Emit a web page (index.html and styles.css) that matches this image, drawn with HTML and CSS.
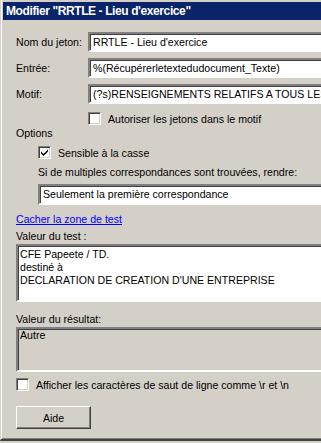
FILE: index.html
```html
<!DOCTYPE html>
<html lang="fr">
<head>
    <meta charset="UTF-8">
    <title>Modifier "RRTLE - Lieu d'exercice"</title>
    <link rel="stylesheet" href="styles.css">
</head>
<body>
    <div class="window">
        <div class="titlebar">Modifier "RRTLE - Lieu d'exercice"</div>

        <div class="content">
            <div class="fields">
                <label class="field-label">Nom du jeton:</label>
                <div class="field">RRTLE - Lieu d'exercice</div>

                <label class="field-label">Entrée:</label>
                <div class="field">%(Récupérerletextedudocument_Texte)</div>

                <label class="field-label">Motif:</label>
                <div class="field">(?s)RENSEIGNEMENTS RELATIFS A TOUS LES ETABLISSEMENTS</div>
            </div>

            <div class="check-row pattern-check">
                <span class="checkbox"></span>
                <span>Autoriser les jetons dans le motif</span>
            </div>

            <div class="group-title">Options</div>
            <div class="options">
                <div class="check-row">
                    <span class="checkbox">
                        <svg width="9" height="9" viewBox="0 0 9 9"><path d="M1 3.5 L3.5 6 L8 1.5 L8 3.5 L3.5 8 L1 5.5 Z" fill="#000"/></svg>
                    </span>
                    <span>Sensible à la casse</span>
                </div>
                <div class="hint">Si de multiples correspondances sont trouvées, rendre:</div>
                <div class="field combo">Seulement la première correspondance</div>
            </div>

            <a class="link" href="#">Cacher la zone de test</a>

            <div class="box-label">Valeur du test :</div>
            <div class="field area">CFE Papeete / TD.<br>destiné à<br>DECLARATION DE CREATION D'UNE ENTREPRISE</div>

            <div class="box-label result-label">Valeur du résultat:</div>
            <div class="field area result">Autre</div>

            <div class="check-row newline-check">
                <span class="checkbox"></span>
                <span>Afficher les caractères de saut de ligne comme \r et \n</span>
            </div>

            <button class="btn">Aide</button>
        </div>
    </div>
</body>
</html>
```

FILE: styles.css
```css
body {
    margin: 0;
    width: 321px;
    height: 443px;
    overflow: hidden;
    background-color: #d4d0c8;
    font-family: "Liberation Sans", Arial, sans-serif;
    font-size: 10.6px;
    color: #000;
}
.window {
    height: 441px;
    border-left: 1px solid #d4d0c8;
    border-bottom: 2px solid #404040;
    box-shadow: inset 1px 0 #fff, inset 0 -1px #808080;
    padding: 2px 0 0 2px;
    box-sizing: border-box;
    overflow: hidden;
}
.titlebar {
    height: 18px;
    line-height: 18px;
    background-color: #0a246a;
    color: #fff;
    font-weight: bold;
    font-size: 12px;
    letter-spacing: -0.4px;
    padding-left: 3px;
    white-space: nowrap;
}
.content {
    padding: 12px 0 0 13px;
    width: 400px;
}
.fields {
    display: grid;
    grid-template-columns: 72px 1fr;
    row-gap: 6px;
    align-items: center;
}
.field {
    background: #fff;
    height: 20px;
    line-height: 16px;
    padding: 0 3px;
    box-sizing: border-box;
    border: 2px solid;
    border-color: #808080 #fff #fff #808080;
    box-shadow: inset 1px 1px #404040;
    white-space: nowrap;
    overflow: hidden;
}
.check-row {
    display: flex;
    align-items: center;
    gap: 7px;
    height: 13px;
}
.checkbox {
    width: 13px;
    height: 13px;
    box-sizing: border-box;
    background: #fff;
    border: 1px solid;
    border-color: #808080 #fff #fff #808080;
    box-shadow: inset 1px 1px #404040, inset -1px -1px #d4d0c8;
    display: flex;
    align-items: center;
    justify-content: center;
}
.pattern-check {
    margin: 8px 0 0 72px;
}
.group-title {
    margin-top: 2px;
    line-height: 13px;
}
.options {
    padding-left: 22px;
    margin-top: 6px;
}
.hint {
    margin-top: 7px;
    line-height: 13px;
}
.combo {
    margin-top: 5px;
    height: 21px;
    line-height: 17px;
}
.link {
    display: inline-block;
    margin-top: 8px;
    line-height: 13px;
    color: #0000ff;
}
.box-label {
    margin-top: 4px;
    line-height: 13px;
}
.area {
    height: 58px;
    margin-top: 1px;
    white-space: normal;
    line-height: 13px;
    padding: 2px 2px;
}
.result-label {
    margin-top: 11px;
}
.result {
    height: 45px;
    background: #d4d0c8;
    padding-top: 0;
}
.newline-check {
    margin-top: 6px;
}
.btn {
    display: block;
    margin-top: 15px;
    width: 75px;
    height: 23px;
    font: inherit;
    background: #d4d0c8;
    border: 1px solid;
    border-color: #fff #404040 #404040 #fff;
    box-shadow: inset -1px -1px #808080;
    padding: 0;
}
```
